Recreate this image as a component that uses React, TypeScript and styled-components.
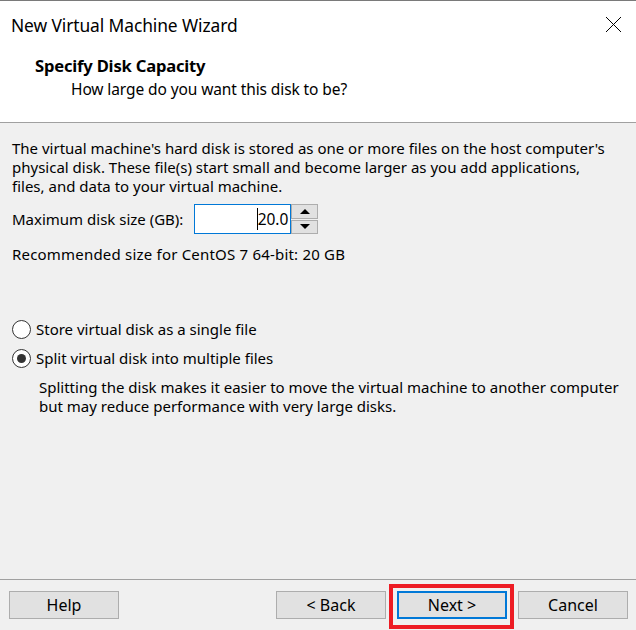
import React from "react";
import styled, { createGlobalStyle } from "styled-components";

const Global = createGlobalStyle`
  html, body { margin: 0; padding: 0; background: #f0f0f0; }
  * { box-sizing: border-box; }
`;

const FONT = `"Noto Sans", "Open Sans", "DejaVu Sans", sans-serif`;

const Window = styled.div`
  width: 636px;
  height: 630px;
  display: flex;
  flex-direction: column;
  overflow: hidden;
  font-family: ${FONT};
  color: #000;
  background: #f0f0f0;
`;

const TitleBar = styled.div`
  height: 50px;
  background: #fff;
  border-top: 1px solid #7a7a7a;
  display: flex;
  align-items: center;
  justify-content: space-between;
  padding: 0 14px 2px 11px;
`;

const TitleText = styled.div`
  font-size: 17.4px;
  letter-spacing: -0.1px;
`;

const CloseIcon = styled.svg`
  width: 17px;
  height: 17px;
  display: block;
`;

const Header = styled.div`
  height: 73px;
  background: #fff;
  border-bottom: 1px solid #a0a0a0;
  padding: 4px 0 0 35px;
`;

const HeaderTitle = styled.div`
  font-size: 16.6px;
  font-weight: 700;
  line-height: 24px;
  letter-spacing: -0.2px;
`;

const HeaderSub = styled.div`
  font-size: 15.5px;
  line-height: 22px;
  padding-left: 36px;
  letter-spacing: -0.1px;
`;

const Body = styled.div`
  flex: 1;
  padding: 16px 6px 0 12px;
  font-size: 15px;
  line-height: 19px;
`;

const Paragraph = styled.p`
  margin: 0;
  white-space: nowrap;
`;

const SizeRow = styled.div`
  display: flex;
  align-items: center;
  margin-top: 8px;
  height: 30px;
`;

const Label = styled.span`
  margin-right: 11px;
`;

const SpinBox = styled.div`
  display: flex;
  height: 30px;
`;

const NumberField = styled.div`
  width: 97px;
  height: 30px;
  border: 1px solid #0078d7;
  background: #fff;
  display: flex;
  align-items: center;
  justify-content: flex-end;
  padding-right: 2px;
  font-size: 15.5px;
`;

const Caret = styled.span`
  display: inline-block;
  width: 1px;
  height: 22px;
  background: #000;
`;

const SpinButtons = styled.div`
  display: flex;
  flex-direction: column;
  width: 27px;
  height: 30px;
  gap: 1px;
`;

const SpinButton = styled.div`
  flex: 1;
  background: #e1e1e1;
  border: 1px solid #adadad;
  display: flex;
  align-items: center;
  justify-content: center;
`;

const Arrow = styled.div<{ $up?: boolean }>`
  width: 0;
  height: 0;
  border-left: 5px solid transparent;
  border-right: 5px solid transparent;
  ${(p) => (p.$up ? "border-bottom: 5px solid #000;" : "border-top: 5px solid #000;")}
`;

const Recommended = styled.div`
  margin-top: 11px;
  letter-spacing: 0.2px;
`;

const RadioGroup = styled.div`
  margin-top: 56px;
  display: flex;
  flex-direction: column;
  gap: 10px;
`;

const RadioRow = styled.label`
  display: flex;
  align-items: center;
  gap: 5px;
  height: 19px;
`;

const RadioCircle = styled.span<{ $checked?: boolean }>`
  width: 19px;
  height: 19px;
  border-radius: 50%;
  border: 1px solid #333;
  background: #fff;
  display: flex;
  align-items: center;
  justify-content: center;
  flex-shrink: 0;
  &::after {
    content: "";
    width: 9px;
    height: 9px;
    border-radius: 50%;
    background: #333;
    display: ${(p) => (p.$checked ? "block" : "none")};
  }
`;

const Description = styled.p`
  margin: 10px 0 0 27px;
  white-space: nowrap;
`;

const Footer = styled.div`
  height: 51px;
  border-top: 1px solid #a0a0a0;
  display: flex;
  align-items: flex-start;
  padding: 11px 8px 0 9px;
`;

const Spacer = styled.div`
  flex: 1;
`;

const Button = styled.button<{ $default?: boolean }>`
  width: 110px;
  height: 28px;
  background: #e1e1e1;
  border: ${(p) => (p.$default ? "2px solid #0078d7" : "1px solid #adadad")};
  font-family: ${FONT};
  font-size: 16px;
  color: #000;
  padding: 0;
  display: flex;
  align-items: center;
  justify-content: center;
`;

const ButtonGroup = styled.div`
  display: flex;
  gap: 11px;
`;

const Highlighted = styled.div`
  position: relative;
`;

const RedBox = styled.div`
  position: absolute;
  top: -7px;
  left: -8px;
  right: -7px;
  bottom: -10px;
  border: 4px solid #ed1c24;
  pointer-events: none;
`;

export default function App() {
  return (
    <>
      <Global />
      <Window>
        <TitleBar>
          <TitleText>New Virtual Machine Wizard</TitleText>
          <CloseIcon viewBox="0 0 17 17">
            <path d="M1 1 L16 16 M16 1 L1 16" stroke="#000" strokeWidth="1" fill="none" />
          </CloseIcon>
        </TitleBar>
        <Header>
          <HeaderTitle>Specify Disk Capacity</HeaderTitle>
          <HeaderSub>How large do you want this disk to be?</HeaderSub>
        </Header>
        <Body>
          <Paragraph>
            The virtual machine's hard disk is stored as one or more files on the host computer's
            <br />
            physical disk. These file(s) start small and become larger as you add applications,
            <br />
            files, and data to your virtual machine.
          </Paragraph>
          <SizeRow>
            <Label>Maximum disk size (GB):</Label>
            <SpinBox>
              <NumberField>
                <Caret />
                20.0
              </NumberField>
              <SpinButtons>
                <SpinButton>
                  <Arrow $up />
                </SpinButton>
                <SpinButton>
                  <Arrow />
                </SpinButton>
              </SpinButtons>
            </SpinBox>
          </SizeRow>
          <Recommended>Recommended size for CentOS 7 64-bit: 20 GB</Recommended>
          <RadioGroup>
            <RadioRow>
              <RadioCircle />
              Store virtual disk as a single file
            </RadioRow>
            <RadioRow>
              <RadioCircle $checked />
              Split virtual disk into multiple files
            </RadioRow>
          </RadioGroup>
          <Description>
            Splitting the disk makes it easier to move the virtual machine to another computer
            <br />
            but may reduce performance with very large disks.
          </Description>
        </Body>
        <Footer>
          <Button>Help</Button>
          <Spacer />
          <ButtonGroup>
            <Button>&lt; Back</Button>
            <Highlighted>
              <Button $default>Next &gt;</Button>
              <RedBox />
            </Highlighted>
            <Button>Cancel</Button>
          </ButtonGroup>
        </Footer>
      </Window>
    </>
  );
}
